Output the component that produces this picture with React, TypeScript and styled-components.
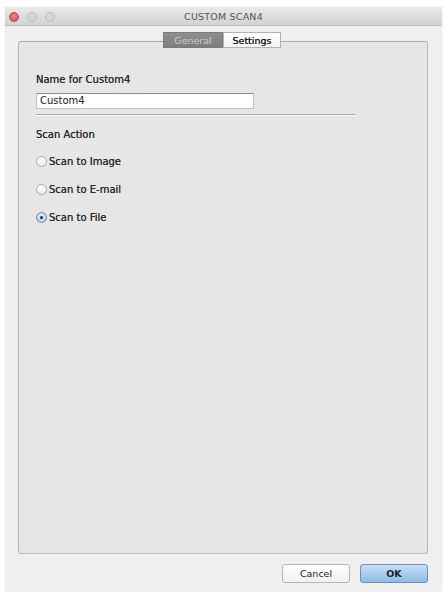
import React from "react";
import styled, { createGlobalStyle } from "styled-components";

const Global = createGlobalStyle`
  html, body { margin: 0; padding: 0; background: #ffffff; }
  body { font-family: "DejaVu Sans", "Liberation Sans", sans-serif; }
`;

const Window = styled.div`
  margin: 7px 3px 0 5px;
  width: 437px;
  height: 585px;
  background: #efefef;
  display: flex;
  flex-direction: column;
  box-shadow: 0 0 2px rgba(0,0,0,0.08);
`;

const TitleBar = styled.div`
  height: 18px;
  position: relative;
  display: flex;
  align-items: center;
  justify-content: center;
  background: linear-gradient(#e9e9e9, #d2d2d2);
  border-bottom: 1px solid #bdbdbd;
`;

const Lights = styled.div`
  position: absolute;
  left: 4px;
  top: 5px;
  display: flex;
  gap: 8px;
`;

const Light = styled.span<{ $red?: boolean }>`
  width: 8px;
  height: 8px;
  border-radius: 50%;
  background: ${(p) => (p.$red ? "radial-gradient(circle at 50% 40%, #f28a8a, #d9434b)" : "#d6d6d6")};
  border: 1px solid ${(p) => (p.$red ? "#b8474e" : "#bcbcbc")};
`;

const Title = styled.div`
  font-size: 9.5px;
  color: #555;
  letter-spacing: 0.2px;
`;

const Body = styled.div`
  flex: 1;
  display: flex;
  flex-direction: column;
  padding: 6px 14px 0 13px;
`;

const TabBar = styled.div`
  display: flex;
  justify-content: center;
  position: relative;
  z-index: 1;
  margin-left: -2px;
`;

const Tab = styled.div<{ $active?: boolean }>`
  height: 14px;
  padding: 0 7px;
  display: flex;
  align-items: center;
  font-size: 9.5px;
  border: 1px solid ${(p) => (p.$active ? "#7a7a7a" : "#b3b3b3")};
  background: ${(p) => (p.$active ? "linear-gradient(#8f8f8f, #7d7d7d)" : "linear-gradient(#ffffff, #f3f3f3)")};
  color: ${(p) => (p.$active ? "#c9c9c9" : "#222")};
  width: ${(p) => (p.$active ? "44px" : "42px")};
  justify-content: center;
  text-shadow: ${(p) => (p.$active ? "none" : "0 0 0.4px #222")};
`;

const Box = styled.div`
  margin-top: -7px;
  height: 513px;
  border: 1px solid #b8b8b8;
  border-top-color: #a9a9a9;
  border-radius: 3px;
  background: #e6e6e6;
  display: flex;
  flex-direction: column;
  padding: 31px 0 0 17px;
  box-sizing: border-box;
`;

const Label = styled.div`
  font-size: 10px;
  line-height: 13px;
  color: #2e2e2e;
  text-shadow: 0 0 0.4px #2e2e2e;
`;

const Input = styled.div`
  margin-top: 7px;
  width: 213px;
  height: 14px;
  background: #fff;
  border: 1px solid #c4c4c4;
  border-top-color: #8e8e8e;
  font-size: 10px;
  line-height: 14px;
  padding-left: 3px;
  color: #222;
  box-sizing: content-box;
`;

const Separator = styled.div`
  margin-top: 5px;
  width: 319px;
  height: 1px;
  background: #a8a8a8;
  border-bottom: 1px solid #f7f7f7;
`;

const Section = styled(Label)`
  margin-top: 12px;
`;

const RadioList = styled.div`
  display: flex;
  flex-direction: column;
  gap: 15px;
  margin-top: 14px;
`;

const RadioRow = styled.div`
  display: flex;
  align-items: center;
  gap: 2px;
  font-size: 10px;
  line-height: 13px;
  color: #2e2e2e;
  text-shadow: 0 0 0.4px #2e2e2e;
`;

const RadioDot = styled.span<{ $on?: boolean }>`
  width: 9px;
  height: 9px;
  border-radius: 50%;
  display: inline-flex;
  align-items: center;
  justify-content: center;
  border: 1px solid ${(p) => (p.$on ? "#6f89b5" : "#a9a9a9")};
  background: ${(p) => (p.$on ? "radial-gradient(circle at 50% 35%, #e9f0fb, #a9c0e4)" : "linear-gradient(#ffffff, #ededed)")};
  &::after {
    content: "";
    width: 3px;
    height: 3px;
    border-radius: 50%;
    background: #1d2a40;
    display: ${(p) => (p.$on ? "block" : "none")};
  }
`;

const Footer = styled.div`
  display: flex;
  justify-content: flex-end;
  gap: 10px;
  margin-top: 10px;
`;

const Button = styled.div<{ $primary?: boolean }>`
  width: 66px;
  height: 17px;
  display: flex;
  align-items: center;
  justify-content: center;
  font-size: 9.5px;
  color: #222;
  border-radius: 3px;
  border: 1px solid ${(p) => (p.$primary ? "#6e8fb8" : "#b4b4b4")};
  background: ${(p) => (p.$primary ? "linear-gradient(#c6def5, #8ebde8)" : "linear-gradient(#ffffff, #f1f1f1)")};
  font-weight: ${(p) => (p.$primary ? "bold" : "normal")};
`;

const radios = [
  { label: "Scan to Image", on: false },
  { label: "Scan to E-mail", on: false },
  { label: "Scan to File", on: true },
];

export default function App() {
  return (
    <>
      <Global />
      <Window>
        <TitleBar>
          <Lights>
            <Light $red />
            <Light />
            <Light />
          </Lights>
          <Title>CUSTOM SCAN4</Title>
        </TitleBar>
        <Body>
          <TabBar>
            <Tab $active>General</Tab>
            <Tab>Settings</Tab>
          </TabBar>
          <Box>
            <Label>Name for Custom4</Label>
            <Input>Custom4</Input>
            <Separator />
            <Section>Scan Action</Section>
            <RadioList>
              {radios.map((r) => (
                <RadioRow key={r.label}>
                  <RadioDot $on={r.on} />
                  {r.label}
                </RadioRow>
              ))}
            </RadioList>
          </Box>
          <Footer>
            <Button>Cancel</Button>
            <Button $primary>OK</Button>
          </Footer>
        </Body>
      </Window>
    </>
  );
}
